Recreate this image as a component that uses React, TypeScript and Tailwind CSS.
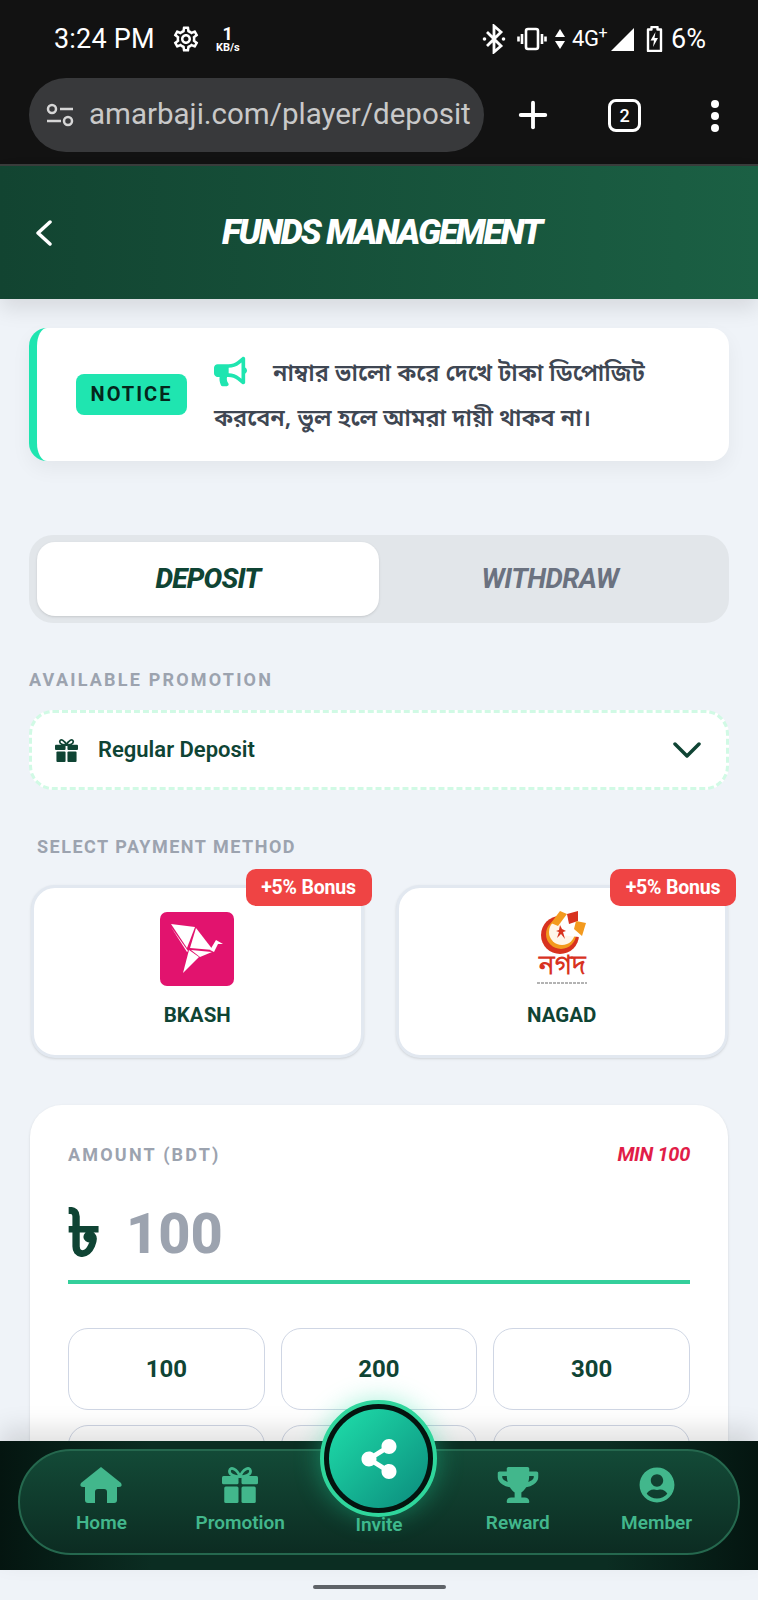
import { Plus } from "lucide-react"
import { FaBullhorn, FaShareAlt, FaTrophy, FaUserCircle } from "react-icons/fa"
import { MdOutlineSettings } from "react-icons/md"

function GiftIcon({ className }: { className?: string }) {
  return (
    <svg className={className} viewBox="0 0 24 24" fill="currentColor">
      <path d="M12 6.500C10 1 5.500-.5 5 2.500c-.4 2.800 3.500 4 7 4zM12 6.500C14 1 18.500-.5 19 2.500c.4 2.800-3.500 4-7 4z" fill="none" stroke="currentColor" strokeWidth="1.800" />
      <rect x="0" y="6" width="11" height="5.500" rx="1" />
      <rect x="13" y="6" width="11" height="5.500" rx="1" />
      <rect x="1.500" y="13" width="9.500" height="11" rx="1" />
      <rect x="13" y="13" width="9.500" height="11" rx="1" />
    </svg>
  )
}

function HomeIcon() {
  return (
    <svg width="42" height="36" viewBox="0 0 42 36" fill="currentColor">
      <path d="M21 0L41 16Q43 20 39 20H37V33a3 3 0 01-3 3H27V25a3 3 0 00-3-3h-6a3 3 0 00-3 3V36H8a3 3 0 01-3-3V20H3Q-1 20 1 16Z" />
    </svg>
  )
}

function StatusBar() {
  return (
    <div className="flex h-[78px] items-center pl-[54px] pr-[52px] text-white">
      <span className="text-[27px] leading-none tracking-[0.2px]">3:24 PM</span>
      <MdOutlineSettings className="ml-[16px] h-[30px] w-[30px]" />
      <div className="ml-[12px] flex w-[30px] flex-col items-center font-bold leading-none">
        <span className="text-[18px] leading-[16px]">1</span>
        <span className="text-[11px] leading-[11px]">KB/s</span>
      </div>
      <div className="ml-auto flex items-center">
        <svg width="24" height="30" viewBox="0 0 24 30" fill="none" stroke="white" strokeWidth="2.800">
          <path d="M5 8l14 14-7 6V2l7 6L5 22" />
          <circle cx="2.500" cy="15" r="1.800" fill="white" stroke="none" />
          <circle cx="21.500" cy="15" r="1.800" fill="white" stroke="none" />
        </svg>
        <svg className="ml-[11px]" width="30" height="24" viewBox="0 0 30 24" fill="none" stroke="white" strokeWidth="2.600">
          <rect x="9" y="2" width="12" height="20" rx="2" />
          <path d="M5 7v10M1.500 9.500v5M25 7v10M28.500 9.500v5" />
        </svg>
        <svg className="ml-[7px]" width="12" height="22" viewBox="0 0 12 22" fill="white">
          <path d="M6 1l5 8H1zM6 21l-5-8h10z" />
        </svg>
        <span className="ml-[6px] text-[22px] leading-none tracking-[-0.5px]">
          4G<sup className="text-[16px] leading-none">+</sup>
        </span>
        <svg className="ml-[4px]" width="23" height="23" viewBox="0 0 23 23" fill="white">
          <path d="M23 0v23H0z" />
        </svg>
        <svg className="ml-[12px]" width="17" height="26" viewBox="0 0 17 26">
          <path d="M5.500 1h6v2.500H15v21.500H2V3.500h3.500z" fill="none" stroke="white" strokeWidth="2.400" strokeLinejoin="round" />
          <path d="M9.500 6l-5 8.500H8l-1 6.500 5-9H8.500z" fill="white" />
        </svg>
        <span className="ml-[8px] text-[27px] leading-none">6%</span>
      </div>
    </div>
  )
}

function BrowserBar() {
  return (
    <div className="flex h-[88px] items-start border-b-2 border-[#3a3d3c] pl-[29px]">
      <div className="flex h-[74px] w-[455px] items-center rounded-full bg-[#38393b] pl-[17px]">
        <svg width="28" height="24" viewBox="0 0 28 24" fill="none" stroke="#d6d6d6" strokeWidth="2.500">
          <circle cx="6" cy="6" r="4" />
          <path d="M14 6h13M1 18h14" />
          <circle cx="22" cy="18" r="4" />
        </svg>
        <span className="ml-[15px] whitespace-nowrap text-[29.500px] leading-none text-[#c9c9c9]">amarbaji.com/player/deposit</span>
      </div>
      <Plus className="ml-[28px] mt-[16px] h-[42px] w-[42px] text-white" strokeWidth={2.2} />
      <div className="ml-[54px] mt-[21px] flex h-[33px] w-[33px] items-center justify-center rounded-[8px] border-[3px] border-white text-[18px] font-medium leading-none text-white">
        2
      </div>
      <div className="ml-[70px] mt-[22px] flex flex-col gap-[4px]">
        <span className="h-[8px] w-[8px] rounded-full bg-white" />
        <span className="h-[8px] w-[8px] rounded-full bg-white" />
        <span className="h-[8px] w-[8px] rounded-full bg-white" />
      </div>
    </div>
  )
}

function BkashLogo() {
  return (
    <svg width="74" height="74" viewBox="0 0 74 74">
      <rect width="74" height="74" rx="7" fill="#e2136e" />
      <g fill="white">
        <path d="M11 12l24 3-8 21z" />
        <path d="M36 16l17 22-23-2z" />
        <path d="M11 15l17 24-1 1z" />
        <path d="M29 38l10 7-16 16z" />
        <path d="M31 38l21 2-12 5z" />
        <path d="M50 38l6-10 7 4-5 0-4 8z" />
      </g>
    </svg>
  )
}

function NagadLogo() {
  return (
    <svg width="60" height="76" viewBox="0 0 60 76">
      <circle cx="28" cy="24" r="19" fill="#d8321f" />
      <circle cx="29" cy="23" r="15" fill="#f39a1e" />
      <circle cx="30" cy="21" r="13" fill="#fff6ea" />
      <path d="M28 24L30 0h30v26H47z" fill="white" />
      <path d="M19 12l9-12 7 3-9 12z" fill="#f39a1e" />
      <path d="M35 3l11-3v10l-9 3z" fill="#d8321f" />
      <path d="M44 10l10 2-4 13-8-7z" fill="#f39a1e" />
      <path d="M28 14l2 4 4 2-3 1 2 7-4-5-4 4 2-6-3-1 3-1z" fill="#d8321f" />
      <text x="30" y="63" textAnchor="middle" fontSize="26" fontWeight="700" fill="#d8321f" fontFamily="'Noto Sans', sans-serif">নগদ</text>
      <path d="M5 72h50" stroke="#9a9a9a" strokeWidth="1.500" strokeDasharray="3 1" />
    </svg>
  )
}

function PaymentCard({ name, logo }: { name: string; logo: React.ReactNode }) {
  return (
    <div className="relative flex h-[173px] flex-1 flex-col items-center rounded-[24px] border-[3px] border-[#e2e8f0] bg-white pt-[24px] shadow-sm">
      <span className="absolute -right-[11px] -top-[19px] flex h-[37px] w-[126px] items-center justify-center rounded-[10px] bg-[#ef4444] text-[19.500px] font-bold leading-none tracking-[-0.2px] text-white">
        +5% Bonus
      </span>
      <div className="flex h-[74px] items-center justify-center">{logo}</div>
      <span className="mt-[19px] text-[20.500px] font-bold leading-none text-[#0f4434]">{name}</span>
    </div>
  )
}

function AmountCard() {
  return (
    <div className="mx-[1px] mt-[47px] rounded-t-[32px] bg-white px-[38px] pt-[38px] shadow-sm">
      <div className="flex items-center justify-between">
        <span className="text-[18px] font-bold leading-[24px] tracking-[2.200px] text-[#9ca3af]">AMOUNT (BDT)</span>
        <span className="-translate-y-[1px] text-[20px] font-bold italic leading-[24px] tracking-[-0.3px] text-[#e11d48]">MIN 100</span>
      </div>
      <div className="mt-[26px] flex h-[91px] items-center border-b-[4px] border-[#34cf9b] pb-[6px]">
        <span className="text-[64px] font-black leading-none text-[#0f4434] [-webkit-text-stroke:1.500px_#0f4434]">৳</span>
        <span className="ml-[26px] text-[56px] font-extrabold leading-none text-[#9ca3af]">100</span>
      </div>
      <div className="mt-[44px] grid grid-cols-3 gap-x-[16px] gap-y-[15px]">
        {["100", "200", "300", "", "", ""].map((v, i) => (
          <div key={i} className="flex h-[82px] items-center justify-center rounded-[20px] border-[1.500px] border-[#cfd6e4] bg-white text-[24px] font-bold leading-none text-[#0f4434]">
            {v}
          </div>
        ))}
      </div>
    </div>
  )
}

function NavItem({ icon, label }: { icon?: React.ReactNode; label: string }) {
  return (
    <div className="flex flex-1 flex-col items-center">
      <div className="flex h-[36px] items-center justify-center text-[#42b78c]">{icon}</div>
      <span className="mt-[9px] text-[19px] font-semibold leading-[22px] text-[#42b78c]">{label}</span>
    </div>
  )
}

function BottomNav() {
  return (
    <div className="relative z-10 h-[129px] bg-[linear-gradient(90deg,#041510,#0b2d22_20%,#0b2d22_80%,#041510)] pt-[8px] shadow-[0_-12px_24px_rgba(0,0,0,0.12)]">
      <div className="mx-[18px] flex h-[106px] items-start rounded-full border-2 border-[#25684e] bg-[linear-gradient(180deg,#134a37,#0c2c22)] px-[12px] pt-[16px]">
        <NavItem icon={<HomeIcon />} label="Home" />
        <NavItem icon={<GiftIcon className="h-[36px] w-[38px]" />} label="Promotion" />
        <div className="flex flex-1 flex-col items-center pt-[47px]">
          <span className="text-[19px] font-semibold leading-[22px] text-[#42b78c]">Invite</span>
        </div>
        <NavItem icon={<FaTrophy className="h-[36px] w-[42px]" />} label="Reward" />
        <NavItem icon={<FaUserCircle className="h-[36px] w-[36px]" />} label="Member" />
      </div>
      <div className="absolute left-[320px] top-[-41px] flex h-[117px] w-[117px] items-center justify-center rounded-full border-[4px] border-[#2fd69c] bg-[#04140f] shadow-[0_0_26px_rgba(30,220,160,0.4)]">
        <div className="flex h-[99px] w-[99px] items-center justify-center rounded-full bg-[linear-gradient(135deg,#1fe0ab,#0b8a7c)]">
          <FaShareAlt className="h-[40px] w-[40px] text-white" />
        </div>
      </div>
    </div>
  )
}

export default function App() {
  return (
    <div className="flex h-[1600px] w-[758px] flex-col overflow-hidden bg-[#eff3f8] font-['Roboto',sans-serif]">
      <div className="bg-[#121212]">
        <StatusBar />
        <BrowserBar />
      </div>

      <header className="relative z-10 flex h-[133px] items-center bg-[linear-gradient(90deg,#124431,#1b6044)] pl-[35px] shadow-[0_10px_20px_rgba(0,0,0,0.1)]">
        <svg width="18" height="26" viewBox="0 0 18 26" fill="none" stroke="white" strokeWidth="3.500" strokeLinecap="round" strokeLinejoin="round">
          <path d="M15 2L3 13l12 11" />
        </svg>
        <h1 className="ml-[169px] whitespace-nowrap text-[35px] font-black italic leading-none tracking-[-2.100px] text-white">
          FUNDS MANAGEMENT
        </h1>
      </header>

      <main className="flex-1 overflow-hidden px-[29px] pt-[29px]">
        <div className="flex h-[133px] items-center rounded-[18px] border-l-[8px] border-[#1fe5b0] bg-white pl-[39px] pr-[30px] shadow-[0_8px_20px_rgba(0,0,0,0.05)]">
          <span className="flex h-[41px] w-[111px] shrink-0 items-center justify-center rounded-[8px] bg-[#1fe5b0] pb-[1px] text-[20px] font-bold leading-none tracking-[2px] text-[#05261c]">
            NOTICE
          </span>
          <p className="ml-[27px] text-[23.500px] font-semibold leading-[45px] text-[#3f4753] font-['Noto_Sans','Noto_Sans_Bengali',sans-serif]">
            <FaBullhorn className="mr-[26px] inline-block h-[33px] w-[33px] -translate-y-[3px] text-[#1fe5b0]" />
            নাম্বার ভালো করে দেখে টাকা ডিপোজিট করবেন, ভুল হলে আমরা দায়ী থাকব না।
          </p>
        </div>

        <div className="mt-[74px] flex h-[88px] rounded-[24px] bg-[#e2e6ea] px-[8px] py-[7px]">
          <div className="flex flex-1 items-center justify-center rounded-[18px] bg-white text-[28px] font-extrabold italic leading-none tracking-[-0.8px] text-[#0f4434] shadow-sm">
            DEPOSIT
          </div>
          <div className="flex flex-1 items-center justify-center text-[27.500px] font-bold italic leading-none tracking-[-0.5px] text-[#6b7280]">
            WITHDRAW
          </div>
        </div>

        <p className="mt-[45px] text-[18px] font-bold leading-[24px] tracking-[2.200px] text-[#9ca3af]">AVAILABLE PROMOTION</p>

        <div className="mt-[18px] flex h-[80px] items-center rounded-[24px] border-[3px] border-dashed border-[#d1fae5] bg-white pl-[23px] pr-[25px]">
          <GiftIcon className="h-[23px] w-[23px] text-[#0f4434]" />
          <span className="ml-[20px] text-[22px] font-semibold leading-none text-[#0f4434]">Regular Deposit</span>
          <svg className="ml-auto" width="28" height="18" viewBox="0 0 28 18" fill="none" stroke="#0f4434" strokeWidth="3.500" strokeLinecap="round" strokeLinejoin="round">
            <path d="M2 3l12 12L26 3" />
          </svg>
        </div>

        <p className="mt-[45px] pl-[8px] text-[18px] font-bold leading-[24px] tracking-[1.500px] text-[#9ca3af]">SELECT PAYMENT METHOD</p>

        <div className="mt-[26px] flex gap-[32px] pl-[2px] pr-[1px]">
          <PaymentCard name="BKASH" logo={<BkashLogo />} />
          <PaymentCard name="NAGAD" logo={<NagadLogo />} />
        </div>

        <AmountCard />
      </main>

      <BottomNav />

      <div className="flex h-[30px] items-start justify-center pt-[15px]">
        <span className="h-[4px] w-[133px] rounded-full bg-[#5f6368]" />
      </div>
    </div>
  )
}
